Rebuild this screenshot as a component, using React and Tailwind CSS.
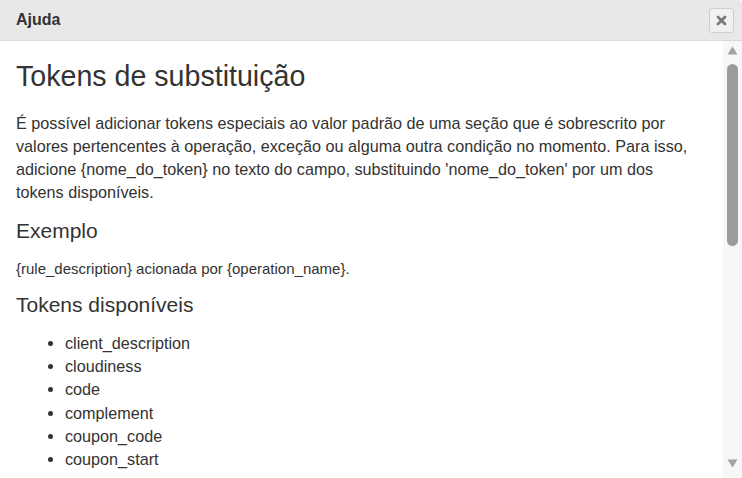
import React from "react";

const tokens = [
  "client_description",
  "cloudiness",
  "code",
  "complement",
  "coupon_code",
  "coupon_start",
];

export default function App() {
  return (
    <div
      className="w-[742px] h-[478px] bg-white flex flex-col overflow-hidden text-[#333]"
      style={{ fontFamily: '"Liberation Sans", Arial, sans-serif' }}
    >
      <div className="h-[41px] shrink-0 bg-[#e8e8e8] border-b border-[#dadada] rounded-tr-[4px] flex items-center justify-between pl-4 pr-2">
        <span className="text-[16px] font-bold leading-none">Ajuda</span>
        <button className="w-[25px] h-[25px] rounded-[3px] border border-[#cfcfcf] bg-[#f1f1f1] flex items-center justify-center">
          <svg width="11" height="11" viewBox="0 0 11 11">
            <path d="M2 2 L9 9 M9 2 L2 9" stroke="#7a7a7a" strokeWidth="2.8" strokeLinecap="round" />
          </svg>
        </button>
      </div>
      <div className="flex-1 flex min-h-0">
        <div className="flex-1 min-w-0 overflow-hidden pl-4">
          <h1 className="mt-[20px] text-[28.6px] leading-[31px] font-normal whitespace-nowrap">Tokens de substituição</h1>
          <p className="mt-[20px] text-[16.2px] leading-[23px] whitespace-nowrap">
            É possível adicionar tokens especiais ao valor padrão de uma seção que é sobrescrito por
            <br />
            valores pertencentes à operação, exceção ou alguma outra condição no momento. Para isso,
            <br />
            adicione {"{nome_do_token}"} no texto do campo, substituindo 'nome_do_token' por um dos
            <br />
            tokens disponíveis.
          </p>
          <h3 className="mt-[15px] text-[21px] leading-[23px] font-normal">Exemplo</h3>
          <p className="mt-[15px] text-[15px] leading-[23px]">
            {"{rule_description} acionada por {operation_name}."}
          </p>
          <h3 className="mt-[13px] text-[21px] leading-[23px] font-normal">Tokens disponíveis</h3>
          <ul className="mt-[16px] list-disc pl-[49px] text-[16.2px] leading-[23.2px]">
            {tokens.map((t) => (
              <li key={t}>{t}</li>
            ))}
          </ul>
        </div>
        <div className="w-[19px] shrink-0 bg-[#f7f7f7] flex flex-col items-center">
          <svg className="mt-[5px]" width="11" height="9" viewBox="0 0 11 9">
            <path d="M5.5 0.5 L10.5 8.5 L0.5 8.5 Z" fill="#a3a3a3" />
          </svg>
          <div className="mt-[9px] w-[11px] h-[182px] rounded-full bg-[#9b9b9b]" />
          <div className="flex-1" />
          <svg className="mb-[10px]" width="11" height="9" viewBox="0 0 11 9">
            <path d="M0.5 0.5 L10.5 0.5 L5.5 8.5 Z" fill="#a3a3a3" />
          </svg>
        </div>
      </div>
    </div>
  );
}
